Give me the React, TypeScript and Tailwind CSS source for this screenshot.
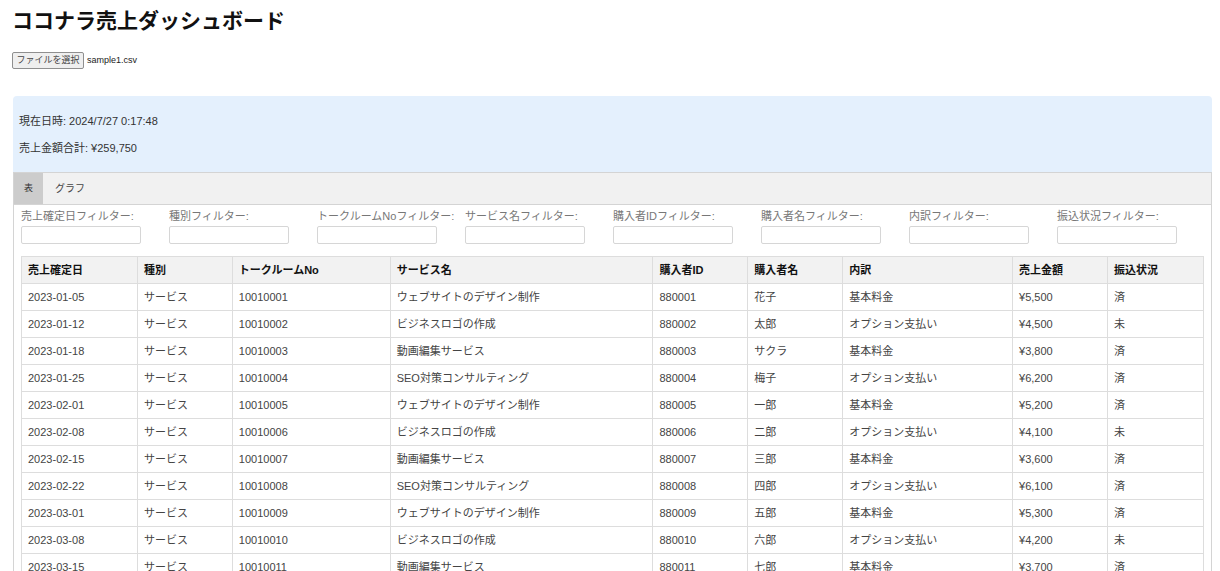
import type { ReactElement } from 'react'

const rows = [
  ['2023-01-05', 'サービス', '10010001', 'ウェブサイトのデザイン制作', '880001', '花子', '基本料金', '¥5,500', '済'],
  ['2023-01-12', 'サービス', '10010002', 'ビジネスロゴの作成', '880002', '太郎', 'オプション支払い', '¥4,500', '未'],
  ['2023-01-18', 'サービス', '10010003', '動画編集サービス', '880003', 'サクラ', '基本料金', '¥3,800', '済'],
  ['2023-01-25', 'サービス', '10010004', 'SEO対策コンサルティング', '880004', '梅子', 'オプション支払い', '¥6,200', '済'],
  ['2023-02-01', 'サービス', '10010005', 'ウェブサイトのデザイン制作', '880005', '一郎', '基本料金', '¥5,200', '済'],
  ['2023-02-08', 'サービス', '10010006', 'ビジネスロゴの作成', '880006', '二郎', 'オプション支払い', '¥4,100', '未'],
  ['2023-02-15', 'サービス', '10010007', '動画編集サービス', '880007', '三郎', '基本料金', '¥3,600', '済'],
  ['2023-02-22', 'サービス', '10010008', 'SEO対策コンサルティング', '880008', '四郎', 'オプション支払い', '¥6,100', '済'],
  ['2023-03-01', 'サービス', '10010009', 'ウェブサイトのデザイン制作', '880009', '五郎', '基本料金', '¥5,300', '済'],
  ['2023-03-08', 'サービス', '10010010', 'ビジネスロゴの作成', '880010', '六郎', 'オプション支払い', '¥4,200', '未'],
  ['2023-03-15', 'サービス', '10010011', '動画編集サービス', '880011', '七郎', '基本料金', '¥3,700', '済'],
]

const headers = ['売上確定日', '種別', 'トークルームNo', 'サービス名', '購入者ID', '購入者名', '内訳', '売上金額', '振込状況']
const widths = ['w-[116px]', 'w-[95px]', 'w-[158px]', 'w-[263px]', 'w-[95px]', 'w-[95px]', 'w-[170px]', 'w-[95px]', 'w-[96px]']

const filters = [
  '売上確定日フィルター:',
  '種別フィルター:',
  'トークルームNoフィルター:',
  'サービス名フィルター:',
  '購入者IDフィルター:',
  '購入者名フィルター:',
  '内訳フィルター:',
  '振込状況フィルター:',
]

export default function App(): ReactElement {
  return (
    <div className="h-[571px] overflow-hidden bg-white pl-[13px] pr-[8px] font-['Liberation_Sans','Noto_Sans_CJK_JP',sans-serif] text-[11px] text-[#333]">
      <h1 className="pt-[8px] text-[21px] font-bold leading-[25px] text-[#111] -ml-[1px]">
        ココナラ売上ダッシュボード
      </h1>

      {/* file input */}
      <div className="mt-[19px] flex items-center gap-[3px] -ml-[1px]">
        <button className="h-[17px] w-[72px] rounded-[2px] border border-[#8f8f8f] bg-[#efefef] text-[9px] leading-[15px] text-[#444]">
          ファイルを選択
        </button>
        <span className="text-[9px] text-[#222]">sample1.csv</span>
      </div>

      {/* summary */}
      <div className="mt-[27px] flex h-[76px] flex-col justify-center gap-[14px] rounded-t-[4px] bg-[#e4f0fd] px-[6px] pt-[2px]">
        <p className="leading-[13px]">現在日時: 2024/7/27 0:17:48</p>
        <p className="leading-[13px]">売上金額合計: ¥259,750</p>
      </div>

      {/* tabs */}
      <div className="border border-[#d4d4d4]">
        <div className="flex h-[32px] border-b border-[#d4d4d4] bg-[#f1f1f1]">
          <div className="flex w-[29px] items-center justify-center bg-[#cccccc] text-[9px]">表</div>
          <div className="flex items-center px-[12px] text-[10px] text-[#444]">グラフ</div>
        </div>

        <div className="px-[7px] pt-[4px]">
          <div className="flex">
            {filters.map((f) => (
              <div key={f} className="w-[148px] shrink-0">
                <div className="text-[11px] leading-[14px] text-[#777]">{f}</div>
                <input className="mt-[3px] h-[18px] w-[120px] rounded-[2px] border border-[#d6d6d6] bg-white outline-none" />
              </div>
            ))}
          </div>

          <table className="mt-[12px] table-fixed border-collapse">
            <thead>
              <tr className="h-[27px] bg-[#f2f2f2]">
                {headers.map((h, i) => (
                  <th key={h} className={`${widths[i]} border border-[#dddddd] px-[6px] text-left text-[11px] font-bold text-[#111]`}>
                    {h}
                  </th>
                ))}
              </tr>
            </thead>
            <tbody>
              {rows.map((r) => (
                <tr key={r[0]} className="h-[27px]">
                  {r.map((c, i) => (
                    <td key={i} className="border border-[#dddddd] px-[6px] text-[11px] text-[#444]">
                      {c}
                    </td>
                  ))}
                </tr>
              ))}
            </tbody>
          </table>
        </div>
      </div>
    </div>
  )
}
